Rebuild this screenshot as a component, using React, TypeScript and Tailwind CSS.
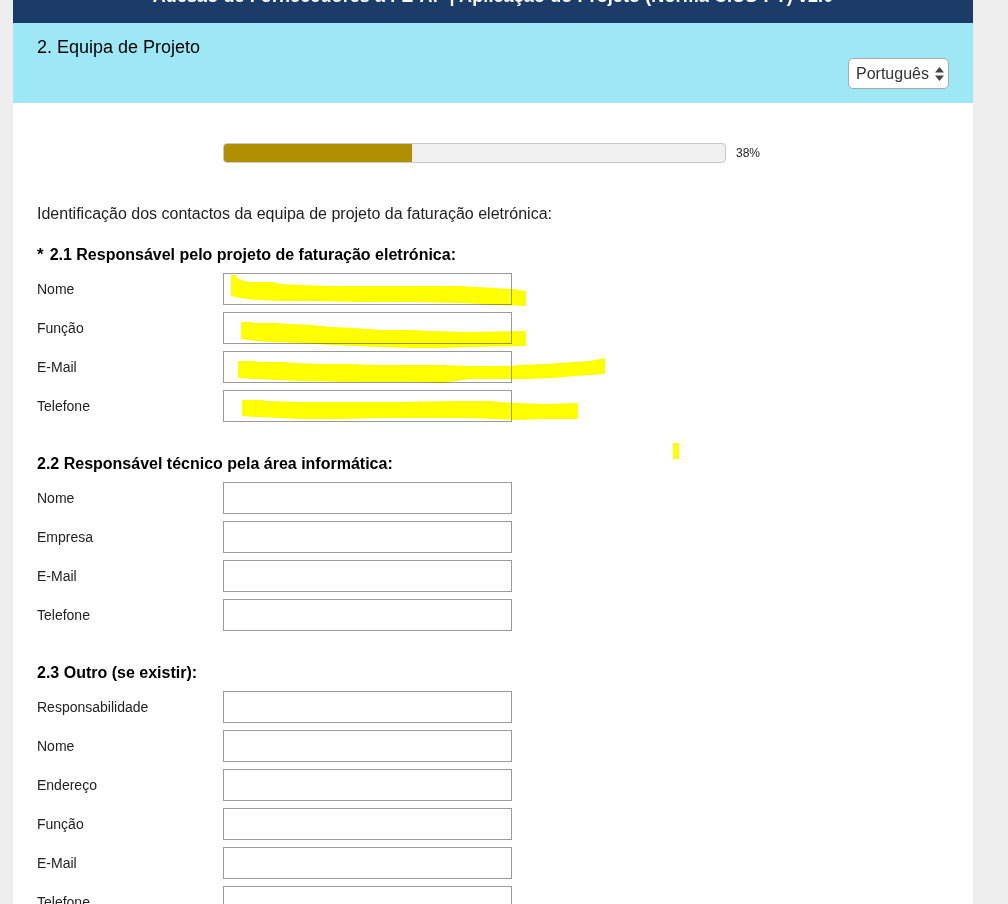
import React from 'react';

type Row = { label: string };

const Field: React.FC<Row> = ({ label }) => (
  <div className="flex items-center h-[32px]">
    <label className="w-[186px] text-[14px] text-[#222]">{label}</label>
    <input
      type="text"
      className="w-[289px] h-[32px] border border-[#999] bg-white outline-none"
    />
  </div>
);

const Section: React.FC<{ title: string; required?: boolean; fields: string[]; className?: string }> = ({
  title,
  required,
  fields,
  className,
}) => (
  <section className={className}>
    <h3 className="text-[16px] leading-[20px] font-bold text-black mb-[8px]">
      {required && <span className="mr-[6px] text-[17px]">*</span>}
      {title}
    </h3>
    <div className="flex flex-col gap-[7px]">
      {fields.map((f) => (
        <Field key={f} label={f} />
      ))}
    </div>
  </section>
);

const SortArrows = () => (
  <svg width="11" height="16" viewBox="0 0 11 16" className="ml-[5px]">
    <path d="M5.5 1 L10 6.5 H1 Z" fill="#444" />
    <path d="M5.5 15 L10 9.5 H1 Z" fill="#444" />
  </svg>
);

// yellow marker strokes painted over the screenshot
const Highlights = () => (
  <svg className="absolute left-0 top-0 pointer-events-none mix-blend-multiply" width="1008" height="904">
    <g fill="#ffff00">
      <polygon points="231,275 236,275 237,278 242,280 248,282 273,282 280,284 300,285 330,286 358,286 400,286 459,286 475,287 495,288 512,289 526,291 526,306 500,305 458,303 410,302 360,302 310,301 280,301 255,300 240,298 231,296" />
      <polygon points="241,322 252,322 253,323 275,323 290,324 310,325 330,327 355,328 380,330 410,330 430,331 470,332 526,331 526,346 470,347 440,348 415,348 380,347 355,346 332,345 300,343 270,342 255,341 241,339" />
      <polygon points="238,361 255,361 258,362 282,362 296,363 320,364 345,364 380,365 415,365 440,365 470,366 510,366 520,365 545,364 560,363 575,362 590,361 605,358 605,374 590,375 575,376 553,378 528,379 500,379 470,379 442,383 415,382 380,382 345,382 300,381 275,380 252,379 238,378" />
      <polygon points="242,400 262,400 266,401 300,402 330,402 400,402 450,401 490,401 500,402 515,403 545,404 578,403 578,419 545,419 515,420 495,419 465,418 400,418 380,418 340,419 300,419 280,418 258,417 242,416" />
      <rect x="673" y="443" width="6" height="16" />
    </g>
  </svg>
);

export default function App() {
  return (
    <div className="relative min-h-[904px] bg-[#eeeeee] font-['Liberation_Sans',Arial,sans-serif] overflow-hidden">
      <div className="ml-[13px] w-[960px] bg-white min-h-[904px]">
        {/* top bar, scrolled partly out of view */}
        <header className="h-[23px] bg-[#1b3c69] overflow-hidden">
          <h1 className="mt-[-13px] text-center text-white font-bold text-[18px] leading-[19px] tracking-[0.1px]">
            Adesão de Fornecedores à FE-AP | Aplicação do Projeto (Norma CIUS-PT) v2.0
          </h1>
        </header>

        <div className="bg-[#9de8f4] pt-[14px] pb-[14px] px-[24px]">
          <h2 className="text-[18px] leading-[20px] text-black">2. Equipa de Projeto</h2>
          <div className="flex justify-end mt-[1px]">
            <div className="flex items-center h-[31px] w-[101px] pl-[7px] border border-[#a9a9a9] rounded-[5px] bg-white text-[16px] text-[#333]">
              Português
              <SortArrows />
            </div>
          </div>
        </div>

        <div className="px-[24px] pt-[40px] pb-[40px]">
          <div className="flex items-center">
            <div className="ml-[186px] w-[503px] h-[20px] rounded-[4px] border border-[#c8c8c8] bg-[#f0f0f0] overflow-hidden">
              <div className="h-full w-[188px] bg-[#b08f00]" />
            </div>
            <span className="ml-[10px] text-[12px] text-[#222]">38%</span>
          </div>

          <p className="mt-[41px] text-[16px] leading-[20px] text-[#222]">
            Identificação dos contactos da equipa de projeto da faturação eletrónica:
          </p>

          <Section
            className="mt-[21px]"
            required
            title="2.1 Responsável pelo projeto de faturação eletrónica:"
            fields={['Nome', 'Função', 'E-Mail', 'Telefone']}
          />
          <Section
            className="mt-[32px]"
            title="2.2 Responsável técnico pela área informática:"
            fields={['Nome', 'Empresa', 'E-Mail', 'Telefone']}
          />
          <Section
            className="mt-[32px]"
            title="2.3 Outro (se existir):"
            fields={['Responsabilidade', 'Nome', 'Endereço', 'Função', 'E-Mail', 'Telefone']}
          />
        </div>
      </div>
      <Highlights />
    </div>
  );
}
